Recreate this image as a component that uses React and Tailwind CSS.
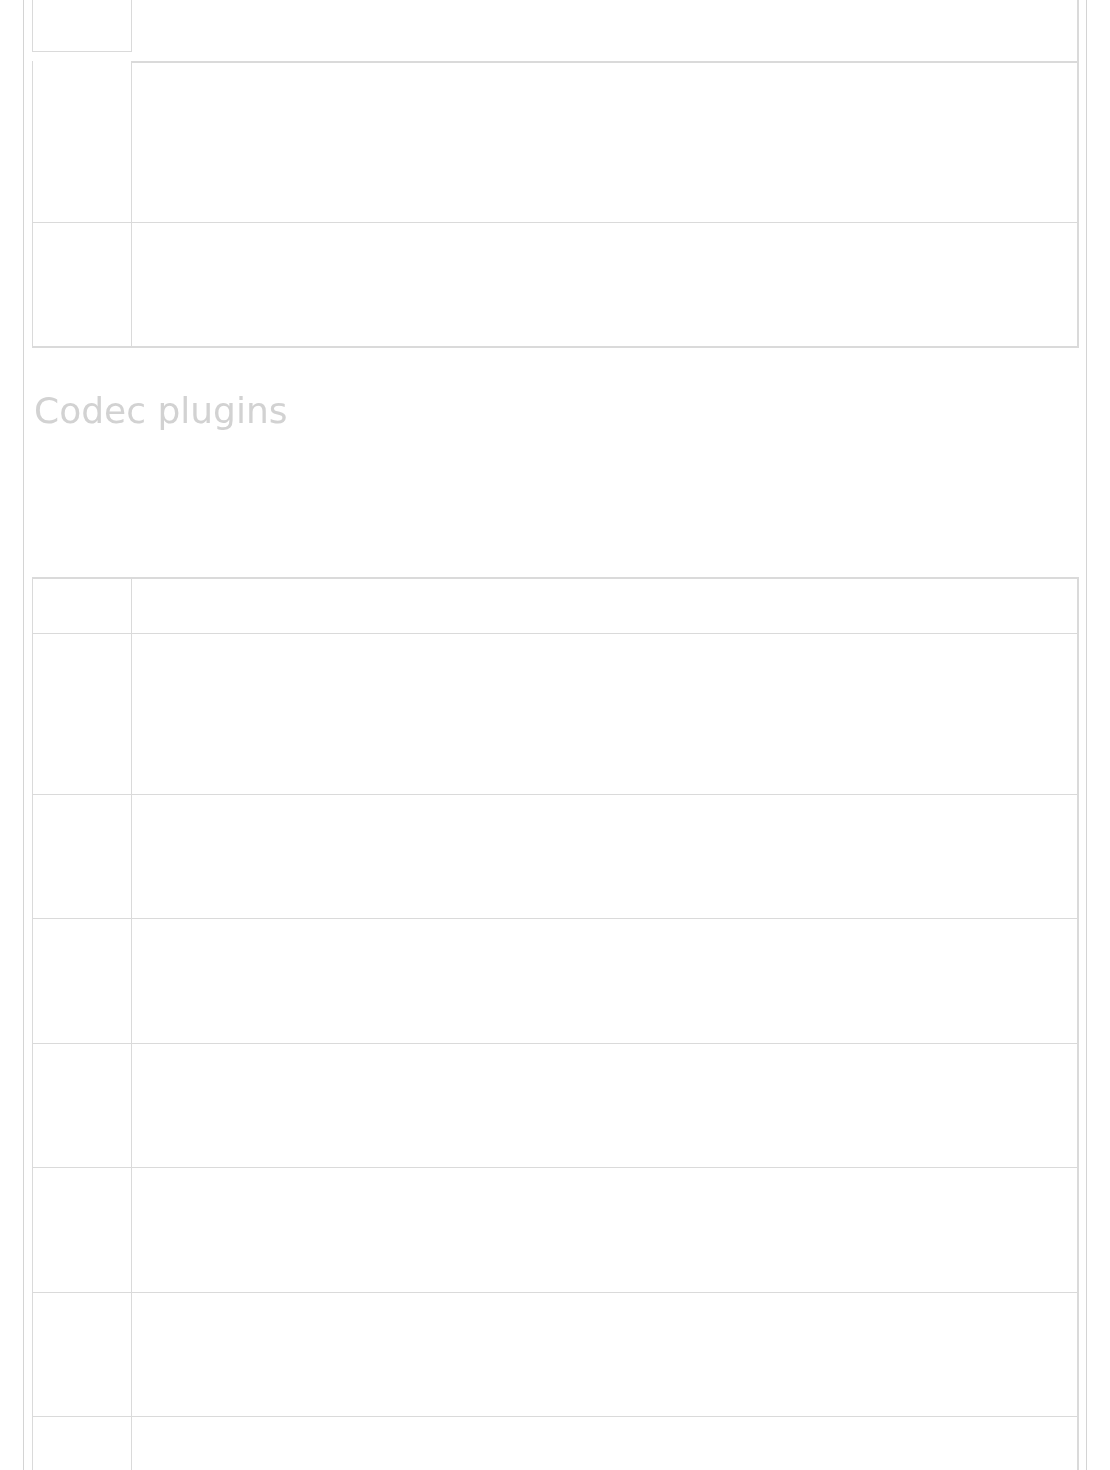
const line = 'border-[#dadada]';

function Row({ height, last }) {
  return (
    <div className={`flex ${last ? '' : 'border-b'} ${line}`} style={{ height }}>
      <div className="w-[98px] shrink-0" />
      <div className={`flex-1 border-l ${line}`} />
    </div>
  );
}

export default function App() {
  const codecRows = [54, 160, 123, 124, 123, 124, 123, 124];

  return (
    <div className="min-h-screen bg-white font-['DejaVu_Sans',sans-serif]">
      <div className="ml-[23px] w-[1064px] border-x border-[#d4d4d4] pl-2 pb-10">
        {/* tail of the previous table */}
        <div className={`w-[1047px] h-[61px] border-r-2 ${line}`}>
          <div className={`w-[100px] h-[52px] border-l border-r border-b ${line}`} />
        </div>
        <div className={`w-[1047px] border-l border-r-2 border-b-2 ${line}`}>
          <div className={`flex h-[162px] border-b ${line}`}>
            <div className="w-[98px] shrink-0" />
            <div className={`flex-1 border-l border-t-2 ${line}`} />
          </div>
          <div className="flex h-[123px]">
            <div className="w-[98px] shrink-0" />
            <div className={`flex-1 border-l ${line}`} />
          </div>
        </div>

        <h2 className="mt-[42px] pl-[2px] text-[36px] leading-[42px] text-[#d2d2d2] blur-[0.6px]">Codec plugins</h2>

        <div className={`mt-[145px] w-[1047px] border-t-2 border-l border-r-2 ${line}`}>
          {codecRows.map((h, i) => (
            <Row key={i} height={h + 1} last={i === codecRows.length - 1} />
          ))}
        </div>
      </div>
    </div>
  );
}
